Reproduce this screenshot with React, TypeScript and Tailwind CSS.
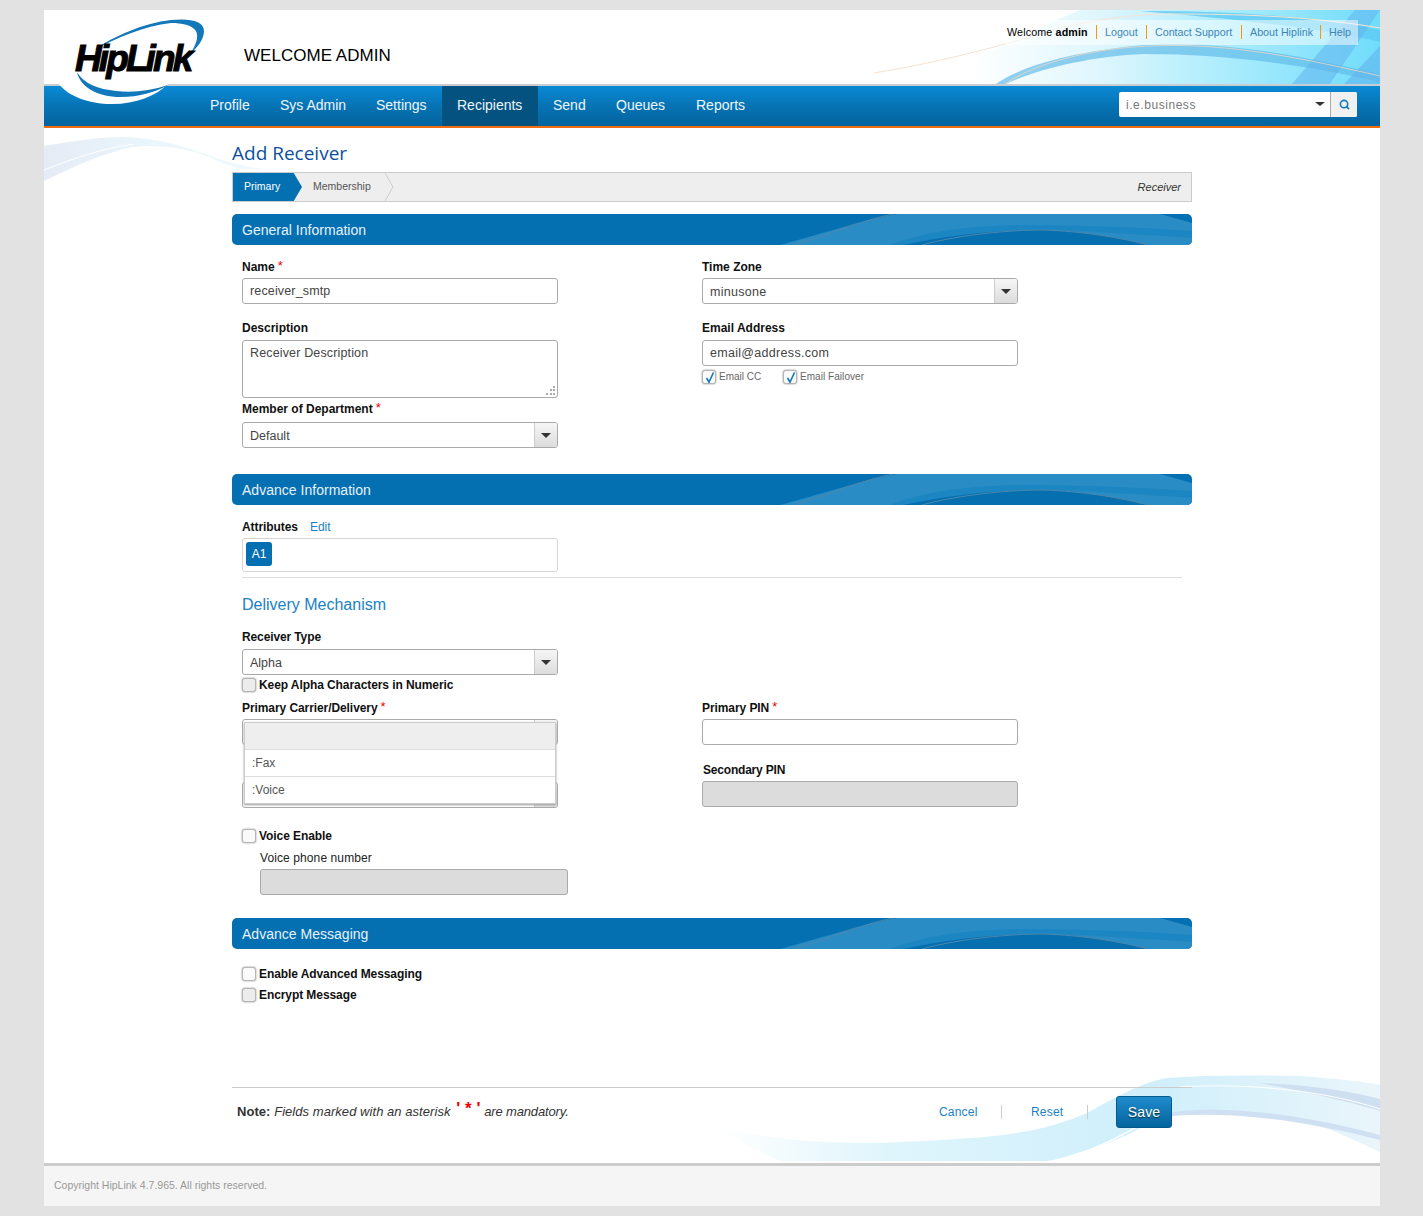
import { Search } from 'lucide-react'
import type { ReactNode } from 'react'

const navItems = [
    { name: 'Profile', width: 'w-[70px]' },
    { name: 'Sys Admin', width: 'w-[96px]' },
    { name: 'Settings', width: 'w-[81px]' },
    { name: 'Recipients', width: 'w-[96px]' },
    { name: 'Send', width: 'w-[63px]' },
    { name: 'Queues', width: 'w-[80px]' },
    { name: 'Reports', width: 'w-[80px]' },
]

const topLinks = [
    { name: 'Logout', width: 'w-[50px]' },
    { name: 'Contact Support', width: 'w-[95px]' },
    { name: 'About Hiplink', width: 'w-[79px]' },
    { name: 'Help', width: 'w-[30px]' },
]

function Logo() {
    return (
        <div className="absolute left-0 top-0 w-[180px] h-[100px]">
            <svg className="absolute left-0 top-0" width="180" height="100" viewBox="0 0 180 100">
                {/* white swoosh over the nav bar */}
                <path d="M15 74 C24 86 44 94 68 94 C92 94 112 86 124 74 Z" fill="#ffffff" />
                {/* lower blue arc */}
                <path d="M33 62 C36 76 50 85 72 87 C92 88 112 82 124 75 C106 81 88 83 72 81 C54 79 40 74 33 62 Z" fill="#1178bc" />
                {/* upper blue arc */}
                <path d="M50 40 C70 26 100 13 127 10 C146 8 160 11 160 21 C160 29 154 37 146 44 C152 35 155 27 152 21 C148 15 138 13 127 13 C100 16 72 28 50 40 Z" fill="#1178bc" />
            </svg>
            <span className="absolute left-[31px] top-[27px] font-['Liberation_Sans',sans-serif] text-[37px] leading-[44px] font-bold italic tracking-[-2.9px] text-black [-webkit-text-stroke:1px_#000]">
                HipLink
            </span>
        </div>
    )
}

function HeaderWave() {
    return (
        <svg className="absolute right-0 top-0" width="580" height="74" viewBox="0 0 580 74">
            <defs>
                <linearGradient id="hw" gradientUnits="userSpaceOnUse" x1="170" y1="0" x2="580" y2="0">
                    <stop offset="0" stopColor="#ffffff" />
                    <stop offset="0.32" stopColor="#def6fd" />
                    <stop offset="0.61" stopColor="#aeedfd" />
                    <stop offset="1" stopColor="#70dcfb" />
                </linearGradient>
            </defs>
            <path d="M120 74 C180 50 230 20 280 0 L580 0 L580 74 Z" fill="url(#hw)" />
            <path d="M340 1 C420 0 510 6 580 20 L580 32 C510 16 420 8 340 1 Z" fill="#5ecbf5" opacity="0.8" />
            <path d="M196 74 C222 56 270 42 344 35 C430 30 510 48 580 64 L580 72 C510 56 430 44 344 44 C290 46 235 60 206 74 Z" fill="#63bce8" opacity="0.7" />
            <path d="M492 74 L555 0 L580 0 L530 74 Z" fill="#62b4ec" opacity="0.55" />
            <path d="M544 74 L580 36 L580 74 Z" fill="#62b4ec" opacity="0.6" />
            <path d="M74 63 C130 54 185 40 230 27 C270 14 320 4 370 4 C410 4 500 4 580 18" fill="none" stroke="#f8e2d2" strokeWidth="1" />
            <path d="M205 74 C240 50 300 38 350 36 C430 32 510 50 580 66" fill="none" stroke="#e8d8c8" strokeWidth="1" opacity="0.8" />
        </svg>
    )
}

function SideWave() {
    return (
        <svg className="absolute left-0 top-[118px]" width="220" height="60" viewBox="0 0 220 60">
            <defs>
                <linearGradient id="sw" x1="0" y1="0" x2="1" y2="0">
                    <stop offset="0" stopColor="#e6ebf6" />
                    <stop offset="0.5" stopColor="#e9f6fc" />
                    <stop offset="1" stopColor="#f2fafd" />
                </linearGradient>
            </defs>
            <path d="M0 18 C30 13 55 9 77 9 C100 9 125 14 150 22 C175 31 195 38 220 41 C205 42 195 41 187 38 C175 34 165 29 160 27 C150 23 130 18 100 18 C85 19 75 22 67 25 C50 29 25 41 0 53 Z" fill="url(#sw)" />
            <path d="M0 42 C30 30 60 20 90 16" fill="none" stroke="#ffffff" strokeWidth="1" />
        </svg>
    )
}

function BottomWave() {
    return (
        <svg className="absolute right-0 bottom-[43px]" width="660" height="90" viewBox="0 0 660 90">
            <defs>
                <linearGradient id="bw" x1="0" y1="0" x2="1" y2="0">
                    <stop offset="0" stopColor="#ffffff" />
                    <stop offset="0.25" stopColor="#dff5fc" />
                    <stop offset="0.65" stopColor="#cfeffb" />
                    <stop offset="1" stopColor="#eaf5fb" />
                </linearGradient>
            </defs>
            <path d="M0 55 C60 68 120 72 180 69 C280 65 320 60 367 40 C400 22 420 10 447 5 C480 2 540 2 580 3 C610 5 640 8 660 12 L660 79 C640 70 620 60 597 52 C575 45 550 40 530 40 C500 38 480 38 457 42 C440 46 425 52 413 59 C395 68 380 73 367 77 C350 82 340 86 327 88 L60 88 C40 80 20 68 0 55 Z" fill="url(#bw)" />
            <path d="M540 10 C590 12 630 18 660 26 L660 38 C620 26 580 18 540 10 Z" fill="#cfdff2" />
            <path d="M440 41 C490 32 560 36 660 62 L660 67 C570 44 500 38 440 44 Z" fill="#cfe0f2" />
            <path d="M343 87 C390 72 420 50 447 40" fill="none" stroke="#ffffff" strokeWidth="1.5" />
            <path d="M460 14 C520 10 600 16 660 36" fill="none" stroke="#ffffff" strokeWidth="1" />
        </svg>
    )
}

function SectionHeader({ title, className }: { title: string; className?: string }) {
    return (
        <div className={`relative h-[31px] rounded-[5px] bg-[#046fb1] overflow-hidden flex items-center pl-[10px] ${className ?? ''}`}>
            <svg className="absolute right-0 top-0" width="420" height="31" viewBox="0 0 420 31">
                <path d="M8 31 C50 20 90 6 125 0 L388 0 L420 9 L420 31 Z" fill="#2a8cc4" />
                <path d="M118 31 C150 18 200 10 270 11 C330 12 380 14 420 17 L420 31 Z" fill="#1c86c2" />
                <path d="M300 16 C350 20 400 22 420 24 L420 31 L376 31 Z" fill="#2a8cc4" />
                <path d="M131 31 C180 20 230 16 270 16 C310 17 350 24 376 31 Z" fill="#056fb0" />
                <path d="M21 31 C60 20 90 6 121 0" fill="none" stroke="#4d87ab" strokeWidth="1" />
                <path d="M150 31 C190 20 240 16 270 16 C310 17 350 24 376 31" fill="none" stroke="#4d87ab" strokeWidth="1" />
            </svg>
            <span className="relative pt-[1px] text-[14px] tracking-[0.02px] text-[#e6f2fa]">{title}</span>
        </div>
    )
}

function Label({ children, required, className }: { children: ReactNode; required?: boolean; className?: string }) {
    return (
        <div className={`h-[14px] leading-[14px] text-[12px] font-bold text-[#111] ${className ?? ''}`}>
            {children}
            {required && <span className="ml-[3px] text-[13px] text-[#f00000] font-normal relative top-[-1px]">*</span>}
        </div>
    )
}

function TextInput({ value, disabled, width = 'w-[316px]', className }: { value?: string; disabled?: boolean; width?: string; className?: string }) {
    return (
        <div className={`${width} h-[26px] rounded-[3px] border border-[#aaaaaa] pl-[7px] text-[12.5px] leading-[25px] text-[#444] ${disabled ? 'bg-[#dcdcdc]' : 'bg-white'} ${className ?? ''}`}>
            {value}
        </div>
    )
}

function SelectBox({ value, className }: { value?: string; className?: string }) {
    return (
        <div className={`w-[316px] h-[26px] rounded-[3px] border border-[#aaaaaa] flex overflow-hidden bg-white ${className ?? ''}`}>
            <div className="flex-1 pl-[7px] text-[12.5px] leading-[27px] text-[#444]">{value}</div>
            <div className="w-[23px] border-l border-[#cccccc] bg-gradient-to-b from-[#f6f6f6] to-[#dcdcdc] flex items-center justify-center">
                <div className="w-0 h-0 border-x-[5px] border-x-transparent border-t-[5px] border-t-[#333]" />
            </div>
        </div>
    )
}

function Check({ checked, muted }: { checked?: boolean; muted?: boolean }) {
    return (
        <span className={`relative block w-[14px] h-[14px] shrink-0 rounded-[3px] border border-[#b5b5b5] shadow-[0_0_2px_#888] ${muted ? 'bg-[#ececec]' : 'bg-[#fafafa]'}`}>
            {checked && (
                <svg className="absolute left-[1px] top-[0px]" width="12" height="13" viewBox="0 0 12 13">
                    <path d="M2.5 7 L5 11 L9.5 1.5" fill="none" stroke="#1178bc" strokeWidth="1.6" />
                </svg>
            )}
        </span>
    )
}

function CheckRow({ label, muted, className }: { label: string; muted?: boolean; className?: string }) {
    return (
        <div className={`flex items-center gap-[3px] h-[14px] text-[12px] font-bold tracking-[-0.08px] text-[#111] ${className ?? ''}`}>
            <Check muted={muted} />
            <span>{label}</span>
        </div>
    )
}

export default function App() {
    return (
        <div className="h-[1216px] bg-[#e2e2e2] pt-[10px] font-['Liberation_Sans',Arial,sans-serif]">
            <div className="relative ml-[44px] w-[1336px] h-[1196px] bg-white flex flex-col overflow-hidden">
                {/* Header */}
                <div className="relative h-[74px] shrink-0">
                    <HeaderWave />
                    <div className="absolute left-[200px] top-[36px] text-[17px] leading-[20px] tracking-[0.03px] text-black">WELCOME ADMIN</div>
                    <div className="absolute right-[22px] top-[10px] h-[25px] pl-[2px] pr-[8px] pb-[2px] bg-white/50 flex items-center text-[10.7px] leading-[14px] text-[#3d85b8]">
                        <span className="w-[89px] tracking-[0.15px] text-black">
                            Welcome <b>admin</b>
                        </span>
                        {topLinks.map((link) => (
                            <span key={link.name} className={`border-l border-[#f59a00] pl-[8px] h-[14px] ${link.width}`}>
                                {link.name}
                            </span>
                        ))}
                    </div>
                </div>
                <div className="h-[2px] shrink-0 bg-[#c9cdd0]" />

                {/* Nav */}
                <div className="h-[42px] shrink-0 border-b-2 border-[#f26c0d] bg-gradient-to-b from-[#0b8ad6] via-[#0673b4] to-[#04649e] flex items-stretch justify-between pl-[151px] pr-[23px]">
                    <div className="flex">
                        {navItems.map((item) => (
                            <div
                                key={item.name}
                                className={`pl-[15px] text-[14px] leading-[38px] text-[#eef6fb] ${item.width} ${item.name === 'Recipients' ? 'bg-[#04527f]' : ''}`}
                            >
                                {item.name}
                            </div>
                        ))}
                    </div>
                    <div className="mt-[6px] h-[25px] w-[238px] flex rounded-[2px] overflow-hidden bg-white">
                        <div className="flex-1 pl-[7px] text-[12px] leading-[26px] tracking-[0.55px] text-[#777] flex justify-between">
                            i.e.business
                            <span className="w-0 h-0 mt-[10px] mr-[5px] border-x-[5px] border-x-transparent border-t-[4px] border-t-[#333]" />
                        </div>
                        <div className="w-[27px] border-l border-[#aaaaaa] bg-[#f1f1f1] flex items-center justify-center">
                            <Search className="w-[11px] h-[11px] text-[#1178bc]" strokeWidth={3.5} />
                        </div>
                    </div>
                </div>

                <SideWave />
                <BottomWave />
                <Logo />

                {/* Content */}
                <div className="relative flex-1 ml-[188px] w-[960px] flex flex-col">
                    <h1 className="mt-[14px] h-[22px] font-['Open_Sans',sans-serif] text-[19px] leading-[22px] text-[#0d4f9e]">Add Receiver</h1>
                    <div className="mt-[8px] h-[30px] border border-[#cccccc] bg-[#eeeeee] flex items-center justify-between pr-[10px]">
                        <div className="flex items-center h-full">
                            <div className="h-full w-[69px] pl-[11px] bg-[#046fb1] text-[10.5px] leading-[27px] text-white [clip-path:polygon(0_0,88%_0,100%_50%,88%_100%,0_100%)]">
                                Primary
                            </div>
                            <div className="ml-[11px] text-[10.5px] text-[#555]">Membership</div>
                            <svg className="ml-[14px]" width="9" height="28" viewBox="0 0 9 28">
                                <path d="M0 0 L8 14 L0 28" fill="none" stroke="#cccccc" />
                            </svg>
                        </div>
                        <span className="text-[11px] italic text-[#333]">Receiver</span>
                    </div>

                    <SectionHeader title="General Information" className="mt-[12px]" />
                    <div className="grid grid-cols-[460px_1fr] pl-[10px] pt-[15px]">
                        <div>
                            <Label required>Name</Label>
                            <TextInput value="receiver_smtp" className="mt-[4px] tracking-[0.15px]" />
                            <Label className="mt-[17px]">Description</Label>
                            <div className="relative mt-[5px] w-[316px] h-[58px] rounded-[3px] border border-[#aaaaaa] pl-[7px] pt-[4px] text-[12.5px] leading-[16px] tracking-[0.15px] text-[#444]">
                                Receiver Description
                                <svg className="absolute right-0 bottom-0" width="13" height="13" viewBox="0 0 13 13" fill="#aaaaaa">
                                    <rect x="9" y="2" width="2" height="2" />
                                    <rect x="6" y="5" width="2" height="2" />
                                    <rect x="9" y="5" width="2" height="2" />
                                    <rect x="2" y="9" width="2" height="2" />
                                    <rect x="6" y="9" width="2" height="2" />
                                    <rect x="9" y="9" width="2" height="2" />
                                </svg>
                            </div>
                            <Label required className="mt-[4px]">Member of Department</Label>
                            <SelectBox value="Default" className="mt-[6px]" />
                        </div>
                        <div>
                            <Label>Time Zone</Label>
                            <SelectBox value="minusone" className="mt-[4px] tracking-[0.3px]" />
                            <Label className="mt-[17px]">Email Address</Label>
                            <TextInput value="email@address.com" className="mt-[5px] tracking-[0.3px]" />
                            <div className="mt-[3px] flex items-center text-[10px] text-[#666]">
                                <Check checked />
                                <span className="ml-[3px] w-[64px]">Email CC</span>
                                <Check checked />
                                <span className="ml-[3px] tracking-[0.05px]">Email Failover</span>
                            </div>
                        </div>
                    </div>

                    <SectionHeader title="Advance Information" className="mt-[26px]" />
                    <div className="pl-[10px] pr-[10px]">
                        <div className="mt-[15px] h-[14px] leading-[14px] flex text-[12px] gap-[12px]">
                            <b className="text-[#111] tracking-[-0.08px]">Attributes</b>
                            <span className="text-[#1a82c4]">Edit</span>
                        </div>
                        <div className="mt-[4px] w-[316px] h-[34px] rounded-[3px] border border-[#d4d4d4] pl-[3px] pt-[3px]">
                            <span className="block w-[26px] h-[24px] rounded-[3px] bg-[#046fb1] text-center text-[12px] leading-[24px] text-white">A1</span>
                        </div>
                        <div className="mt-[5px] h-px bg-[#dddddd]" />
                        <h2 className="mt-[17px] h-[20px] text-[16px] leading-[20px] text-[#1a82c4]">Delivery Mechanism</h2>
                        <Label className="mt-[15px] tracking-[-0.12px]">Receiver Type</Label>
                        <SelectBox value="Alpha" className="mt-[5px]" />
                        <CheckRow label="Keep Alpha Characters in Numeric" muted className="mt-[3px]" />

                        <div className="relative mt-[9px] grid grid-cols-[460px_1fr]">
                            <div>
                                <Label required className="tracking-[-0.08px]">Primary Carrier/Delivery</Label>
                                <SelectBox className="mt-[4px]" />
                                <div className="mt-[18px] h-[14px]" />
                                <SelectBox className="mt-[5px]" />
                            </div>
                            <div>
                                <Label required className="tracking-[-0.08px]">Primary PIN</Label>
                                <TextInput className="mt-[4px]" />
                                <Label className="mt-[18px] ml-px tracking-[-0.2px]">Secondary PIN</Label>
                                <TextInput disabled className="mt-[4px]" />
                            </div>
                            {/* Open carrier dropdown */}
                            <div className="absolute left-[2px] top-[21px] w-[312px] border border-[#cccccc] bg-white shadow-[0_1px_2px_#999] text-[12px] text-[#555]">
                                <div className="h-[27px] bg-[#eeeeee] border-b border-[#dddddd]" />
                                <div className="h-[27px] pl-[7px] leading-[26px] border-b border-[#dddddd]">:Fax</div>
                                <div className="h-[26px] pl-[7px] leading-[26px]">:Voice</div>
                            </div>
                        </div>

                        <CheckRow label="Voice Enable" className="mt-[21px]" />
                        <div className="ml-[18px]">
                            <div className="mt-[8px] h-[14px] text-[12px] leading-[14px] tracking-[0.1px] text-[#222]">Voice phone number</div>
                            <TextInput disabled width="w-[308px]" className="mt-[4px]" />
                        </div>
                    </div>

                    <SectionHeader title="Advance Messaging" className="mt-[23px]" />
                    <div className="pl-[10px]">
                        <CheckRow label="Enable Advanced Messaging" className="mt-[18px]" />
                        <CheckRow label="Encrypt Message" muted className="mt-[7px]" />
                    </div>

                    <div className="mt-[85px] h-px bg-[#cccccc]" />
                    <div className="flex items-start">
                        <div className="mt-[13px] ml-[5px] w-[672px] h-[20px] text-[13px] leading-[20px] tracking-[0.05px] text-[#333]">
                            <b>Note:</b> <i>Fields marked with an asterisk</i>{' '}
                            <b className="relative top-[-2px] ml-[2px] text-[#f00000] text-[17px]">' * '</b> <i className="tracking-[-0.15px]">are mandatory.</i>
                        </div>
                        <div className="flex items-center mt-[8px] text-[12px] text-[#1a82c4] tracking-[0.2px]">
                            <span className="ml-[30px] w-[39px]">Cancel</span>
                            <span className="ml-[23px] h-[14px] border-l border-[#cccccc]" />
                            <span className="ml-[29px] w-[34px]">Reset</span>
                            <span className="ml-[22px] h-[14px] border-l border-[#cccccc]" />
                            <span className="ml-[28px] w-[56px] h-[32px] rounded-[3px] border border-[#05598e] bg-gradient-to-b from-[#1f8ccc] to-[#04649e] text-center text-[14px] leading-[30px] text-white [text-shadow:0_1px_1px_#033]">
                                Save
                            </span>
                        </div>
                    </div>
                </div>

                {/* Footer */}
                <div className="relative h-[43px] shrink-0 border-t-[3px] border-[#cccccc] bg-[#f5f5f5] pl-[10px] text-[10.5px] leading-[38px] text-[#999]">
                    Copyright HipLink 4.7.965. All rights reserved.
                </div>
            </div>
        </div>
    )
}
